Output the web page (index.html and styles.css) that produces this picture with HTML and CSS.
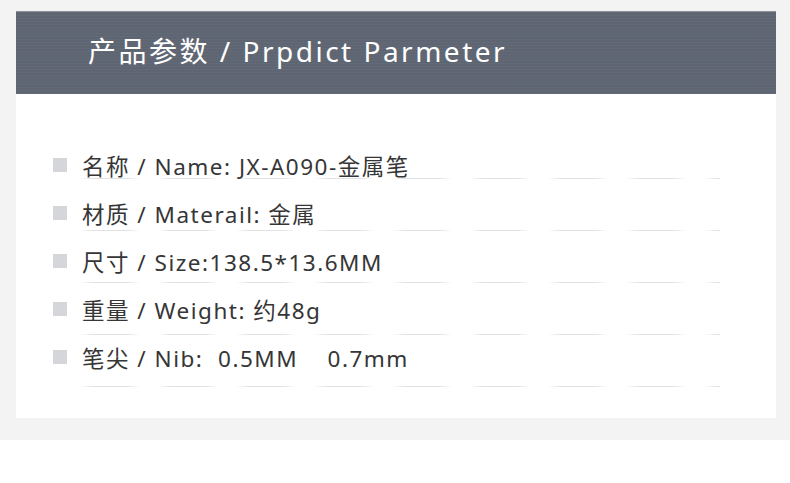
FILE: index.html
```html
<!DOCTYPE html>
<html lang="zh">
<head>
<meta charset="utf-8">
<link rel="stylesheet" href="styles.css">
</head>
<body>
<div class="page">
  <div class="card">
    <div class="header">
      <h1 class="title">产品参数 / Prpdict Parmeter</h1>
    </div>
    <div class="list">
      <div class="lines">
        <div class="line l1"></div>
        <div class="line"></div>
        <div class="line"></div>
        <div class="line"></div>
        <div class="line"></div>
      </div>
      <ul class="rows">
        <li class="row"><span class="bullet"></span><span class="text">名称 / Name: JX-A090-金属笔</span></li>
        <li class="row"><span class="bullet"></span><span class="text">材质 / Materail: 金属</span></li>
        <li class="row"><span class="bullet"></span><span class="text">尺寸 / Size:138.5*13.6MM</span></li>
        <li class="row"><span class="bullet"></span><span class="text">重量 / Weight: 约48g</span></li>
        <li class="row"><span class="bullet"></span><span class="text">笔尖 / Nib:&nbsp; 0.5MM &nbsp;&nbsp; 0.7mm</span></li>
      </ul>
    </div>
  </div>
</div>
</body>
</html>
```
FILE: styles.css
```css
html, body {
  margin: 0;
  padding: 0;
  background: #ffffff;
}
body {
  width: 790px;
  height: 483px;
  overflow: hidden;
  font-family: "Noto Sans", "Noto Sans CJK SC", sans-serif;
}
.page {
  background: #f3f3f3;
  height: 440px;
  box-sizing: border-box;
  padding: 11px 14px 0 16px;
}
.card {
  background: #ffffff;
  height: 407px;
  display: flex;
  flex-direction: column;
}
.header {
  height: 83px;
  box-sizing: border-box;
  background-color: #606774;
  background-image: repeating-linear-gradient(to bottom, rgba(255,255,255,0.02) 0 1px, rgba(0,0,0,0.015) 1px 3px);
  border-top: 1px solid #8a8f98;
  display: flex;
  align-items: center;
  padding-left: 72px;
  padding-bottom: 5px;
}
.title {
  margin: 0;
  color: #ffffff;
  font-weight: 400;
  font-size: 28px;
  letter-spacing: 2.5px;
  line-height: 1;
}
.list {
  display: grid;
  padding-top: 47px;
}
.lines, .rows {
  grid-area: 1 / 1;
}
.lines {
  display: flex;
  flex-direction: column;
  gap: 51px;
  padding-top: 37px;
  padding-left: 64px;
}
.line {
  width: 640px;
  height: 1px;
  background-image: linear-gradient(to right, rgba(220,220,220,0) 0, #e2e2e2 12px, #e2e2e2 48px, rgba(220,220,220,0) 60px, rgba(255,255,255,0) 78px);
  background-size: 78px 1px;
  background-repeat: repeat-x;
}
.rows {
  list-style: none;
  margin: 0;
  padding: 0 0 0 37px;
  display: flex;
  flex-direction: column;
}
.row {
  height: 48px;
  display: flex;
  align-items: center;
}
.bullet {
  width: 14px;
  height: 14px;
  background: #d4d6da;
  margin-right: 15px;
  flex: none;
}
.text {
  font-size: 22.5px;
  color: #363636;
  letter-spacing: 1.5px;
}
```
